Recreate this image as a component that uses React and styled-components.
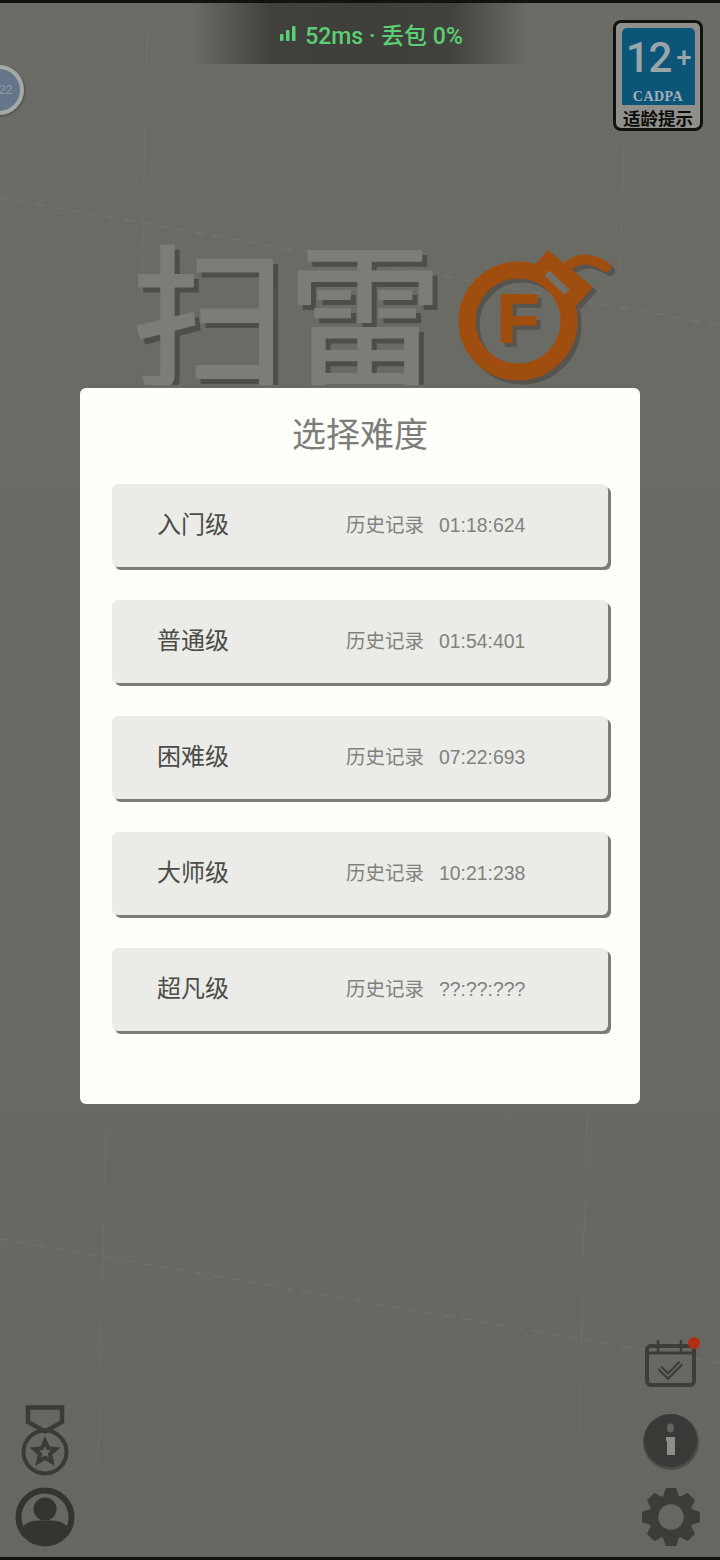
import styled, { createGlobalStyle } from "styled-components";

const GlobalStyle = createGlobalStyle`
  html, body {
    margin: 0;
    padding: 0;
    background: #686963;
  }
  * {
    box-sizing: border-box;
  }
`;

const CJK = `"Noto Sans CJK SC", "Noto Sans", sans-serif`;

const levels = [
  { name: "入门级", record: "01:18:624" },
  { name: "普通级", record: "01:54:401" },
  { name: "困难级", record: "07:22:693" },
  { name: "大师级", record: "10:21:238" },
  { name: "超凡级", record: "??:??:???" },
];

// 톱니 경로
const gearPath = (cx, cy, outer, root, teeth) => {
  const pts = [];
  const step = (Math.PI * 2) / teeth;
  for (let i = 0; i < teeth; i++) {
    const a = i * step - Math.PI / 2;
    const list = [
      [root, a - step * 0.42],
      [outer, a - step * 0.2],
      [outer, a + step * 0.2],
      [root, a + step * 0.42],
    ];
    list.forEach(([r, t]) => {
      pts.push(`${(cx + r * Math.cos(t)).toFixed(2)} ${(cy + r * Math.sin(t)).toFixed(2)}`);
    });
  }
  return `M${pts.join("L")}Z`;
};

const SceneLines = () => (
  <Scene viewBox="0 0 720 1560">
    <g stroke="#ffffff" strokeOpacity="0.06" strokeWidth="1.5" fill="none">
      <path d="M0 195 L720 322" strokeDasharray="9 9" />
      <path d="M0 1236 L720 1360" strokeDasharray="9 9" />
    </g>
    <g stroke="#ffffff" strokeOpacity="0.035" strokeWidth="1.5" fill="none">
      <path d="M147 30 L142 270" strokeDasharray="58 38" />
      <path d="M624 140 L620 270" strokeDasharray="50 30" />
      <path d="M106 1125 L98 1460" strokeDasharray="58 36" />
      <path d="M587 1110 L578 1460" strokeDasharray="52 38" />
    </g>
  </Scene>
);

const SignalIcon = () => (
  <svg width="17" height="15" viewBox="0 0 17 15">
    <rect x="0" y="8" width="3.5" height="7" rx="1" fill="#5ccf74" />
    <rect x="6" y="4" width="3.5" height="11" rx="1" fill="#5ccf74" />
    <rect x="12" y="0" width="3.5" height="15" rx="1" fill="#5ccf74" />
  </svg>
);

const bombCap = "M98 0 L83 17 L127 55 L143 37 Z";
const bombFuse = "M117 17 C126 8 140 6 156 17";

const BombLogo = () => (
  <BombSvg viewBox="0 0 165 135" width="165" height="135">
    <g transform="translate(4 4)">
      <circle cx="68" cy="71" r="51" fill="none" stroke="#56544c" strokeWidth="17" />
      <path d={bombCap} fill="#56544c" />
      <path d={bombFuse} fill="none" stroke="#56544c" strokeWidth="10" strokeLinecap="round" />
    </g>
    <circle cx="68" cy="71" r="51" fill="none" stroke="#a04e10" strokeWidth="17" />
    <path d={bombCap} fill="#a04e10" />
    <path d={bombFuse} fill="none" stroke="#a04e10" strokeWidth="10" strokeLinecap="round" />
    <path d="M97 23 L117 42" stroke="#73726a" strokeWidth="7" />
    <BombLetter x="68" y="92" fill="#a04e10" stroke="#a04e10">F</BombLetter>
  </BombSvg>
);

const MedalIcon = () => (
  <svg width="48" height="72" viewBox="0 0 48 72">
    <g fill="none" stroke="#3a3b37" strokeWidth="4.5">
      <path d="M7 2.5 H41 V17 L24 26.5 L7 17 Z" />
      <circle cx="24" cy="47" r="21.5" strokeWidth="4" />
    </g>
    <path
      d="M24 31 L28.6 41.5 L39.5 42.5 L31.3 49.8 L33.8 61 L24 55 L14.2 61 L16.7 49.8 L8.5 42.5 L19.4 41.5 Z"
      fill="#3a3b37"
    />
    <path
      d="M24 41 L25.7 45 L30 45.4 L26.7 48.4 L27.7 52.6 L24 50.4 L20.3 52.6 L21.3 48.4 L18 45.4 L22.3 45 Z"
      fill="#686963"
    />
  </svg>
);

const ProfileIcon = () => (
  <svg width="60" height="60" viewBox="0 0 60 60">
    <defs>
      <clipPath id="profile-clip">
        <circle cx="30" cy="30" r="24" />
      </clipPath>
    </defs>
    <circle cx="30" cy="30" r="26.5" fill="none" stroke="#343531" strokeWidth="6" />
    <g clipPath="url(#profile-clip)" fill="#343531">
      <circle cx="30" cy="22" r="11.5" />
      <path d="M6 60 V46 C6 38 14 34 22 33.5 H38 C46 34 54 38 54 46 V60 Z" />
    </g>
  </svg>
);

const CalendarIcon = () => (
  <CalendarWrap>
    <svg width="52" height="48" viewBox="0 0 52 48">
      <g fill="none" stroke="#3c3d39" strokeWidth="4">
        <rect x="2" y="7" width="47" height="39" rx="4" />
        <path d="M2 14 H49" strokeWidth="3" />
        <path d="M13 1 V13 M36 1 V13" strokeWidth="2.5" />
      </g>
      <path d="M15 29 L23 37 L36 24" fill="none" stroke="#3c3d39" strokeWidth="6" />
      <path d="M15 29 L23 37 L36 24" fill="none" stroke="#6b6c66" strokeWidth="1.5" />
    </svg>
    <RedDot />
  </CalendarWrap>
);

const InfoIcon = () => (
  <svg width="58" height="58" viewBox="0 0 58 58">
    <circle cx="29" cy="29" r="28" fill="#4b4c48" />
    <circle cx="28.5" cy="27.5" r="26.5" fill="#393a37" />
    <ellipse cx="28.5" cy="15" rx="3.5" ry="4.5" fill="#62635e" />
    <path d="M24 24 H33 V42 H25 V28 H24 Z" fill="#8d8e88" />
  </svg>
);

const GearIcon = () => (
  <svg width="60" height="60" viewBox="0 0 60 60">
    <path
      fillRule="evenodd"
      fill="#3c3d39"
      stroke="#3c3d39"
      strokeWidth="2.5"
      strokeLinejoin="round"
      d={`${gearPath(30, 30, 28, 21, 8)} M30 16 A14 14 0 1 0 30 44 A14 14 0 1 0 30 16 Z`}
    />
  </svg>
);

const App = () => {
  return (
    <Screen>
      <GlobalStyle />
      <SceneLines />

      <TopBar>
        <AvatarChip>22</AvatarChip>
        <AgeBadge>
          <AgePanel>
            <AgeNumber>
              12<AgePlus>+</AgePlus>
            </AgeNumber>
            <AgeOrg>CADPA</AgeOrg>
          </AgePanel>
          <AgeCaption>适龄提示</AgeCaption>
        </AgeBadge>
      </TopBar>

      <NetworkHud>
        <SignalIcon />
        <span>52ms · 丢包 0%</span>
      </NetworkHud>

      <LogoRow>
        <LogoTitle>扫雷</LogoTitle>
        <BombLogo />
      </LogoRow>

      <BottomBar>
        <LeftDock>
          <MedalIcon />
          <ProfileIcon />
        </LeftDock>
        <RightDock>
          <CalendarIcon />
          <InfoIcon />
          <GearIcon />
        </RightDock>
      </BottomBar>

      <ModalLayer>
        <Modal>
          <ModalTitle>选择难度</ModalTitle>
          <LevelList>
            {levels.map((level) => (
              <LevelRow key={level.name}>
                <LevelName>{level.name}</LevelName>
                <RecordLabel>历史记录</RecordLabel>
                <RecordTime>{level.record}</RecordTime>
              </LevelRow>
            ))}
          </LevelList>
        </Modal>
      </ModalLayer>
    </Screen>
  );
};

export default App;

const Screen = styled.div`
  position: relative;
  width: 720px;
  height: 1560px;
  overflow: hidden;
  display: flex;
  flex-direction: column;
  background: linear-gradient(180deg, #6b6c65 0%, #696a64 35%, #666760 100%);
  border-top: 3px solid #12120f;
  border-bottom: 3px solid #12120f;
  font-family: ${CJK};
`;

const Scene = styled.svg`
  position: absolute;
  inset: 0;
  width: 720px;
  height: 1560px;
`;

const TopBar = styled.div`
  position: relative;
  display: flex;
  justify-content: space-between;
  align-items: flex-start;
  padding: 17px 17px 0 0;
`;

// 왼쪽 위 레벨 배지
const AvatarChip = styled.div`
  width: 50px;
  height: 50px;
  margin: 45px 0 0 -26px;
  padding-left: 21px;
  border-radius: 50%;
  border: 4px solid #a4a8a7;
  background: #66768a;
  color: #8f99a5;
  font: 12px/42px "Liberation Sans", sans-serif;
  box-shadow: 1px 1px 2px rgba(50, 50, 45, 0.5);
`;

const AgeBadge = styled.div`
  width: 90px;
  height: 111px;
  display: flex;
  flex-direction: column;
  align-items: center;
  padding-top: 5px;
  border: 3px solid #12120f;
  border-radius: 8px;
  background: #8f908c;
`;

const AgePanel = styled.div`
  width: 73px;
  height: 77px;
  display: flex;
  flex-direction: column;
  align-items: center;
  border-radius: 5px 5px 0 0;
  background: #0b5579;
`;

const AgeNumber = styled.div`
  height: 52px;
  padding-top: 10px;
  color: #9aa5aa;
  font: 500 42px/40px "Roboto", sans-serif;
  letter-spacing: -1px;
`;

const AgePlus = styled.span`
  margin-left: 5px;
  font-size: 27px;
  vertical-align: 5px;
`;

const AgeOrg = styled.div`
  margin-top: 9px;
  color: #a4afb4;
  font: 700 14px/16px "Liberation Serif", serif;
  letter-spacing: 0.5px;
`;

const AgeCaption = styled.div`
  margin-top: 2px;
  color: #0a0a08;
  font: 700 17.5px/22px ${CJK};
  white-space: nowrap;
`;

const NetworkHud = styled.div`
  position: absolute;
  top: -3px;
  left: 190px;
  width: 340px;
  height: 64px;
  display: flex;
  align-items: center;
  justify-content: center;
  gap: 8px;
  padding: 3px 0 0 23px;
  color: #5ccf74;
  font-family: "Roboto", ${CJK};
  font-size: 23px;
  font-weight: 500;
  white-space: nowrap;
  background: linear-gradient(
    90deg,
    rgba(62, 63, 58, 0) 0%,
    rgba(62, 63, 58, 0.95) 24%,
    rgba(62, 63, 58, 1) 50%,
    rgba(62, 63, 58, 0.95) 76%,
    rgba(62, 63, 58, 0) 100%
  );
`;

const LogoRow = styled.div`
  position: relative;
  display: flex;
  align-items: flex-start;
  padding: 87px 0 0 131px;
`;

const LogoTitle = styled.div`
  height: 167px;
  overflow: hidden;
  color: #7c7d78;
  font-size: 156px;
  font-weight: 500;
  line-height: 180px;
  white-space: nowrap;
  text-shadow: 5px 5px 0 #4d4e49;
`;

const BombSvg = styled.svg`
  flex: none;
  margin: 32px 0 0 7px;
`;

const BombLetter = styled.text`
  font: 700 68px "Liberation Sans", sans-serif;
  text-anchor: middle;
  stroke-width: 2;
  stroke-linejoin: round;
  filter: drop-shadow(4px 4px 0 #56544c);
`;

const BottomBar = styled.div`
  position: relative;
  margin-top: auto;
  display: flex;
  justify-content: space-between;
  align-items: flex-end;
  padding: 0 19px 10px 15px;
`;

const LeftDock = styled.div`
  display: flex;
  flex-direction: column;
  align-items: center;
  gap: 10px;
`;

const RightDock = styled.div`
  display: flex;
  flex-direction: column;
  align-items: center;
  gap: 16px;
`;

const CalendarWrap = styled.div`
  position: relative;
  width: 52px;
  height: 48px;
  margin-bottom: 10px;
`;

const RedDot = styled.span`
  position: absolute;
  top: -2px;
  right: -3px;
  width: 12px;
  height: 12px;
  border-radius: 50%;
  background: #b32e10;
`;

const ModalLayer = styled.div`
  position: absolute;
  inset: 0;
  display: flex;
  justify-content: center;
  align-items: flex-start;
  padding-top: 385px;
`;

const Modal = styled.div`
  width: 560px;
  height: 716px;
  padding: 0 32px;
  border-radius: 6px;
  background: #fefffb;
`;

const ModalTitle = styled.h2`
  margin: 0;
  height: 96px;
  color: #7c7d79;
  font-size: 34px;
  font-weight: 400;
  line-height: 90px;
  text-align: center;
`;

const LevelList = styled.div`
  display: flex;
  flex-direction: column;
  gap: 33px;
`;

// 난이도 한 줄
const LevelRow = styled.div`
  width: 496px;
  height: 83px;
  display: flex;
  align-items: center;
  padding-left: 45px;
  border-radius: 6px;
  background: #ebebe8;
  box-shadow: 3px 3px 0 #7c7d77;
`;

const LevelName = styled.div`
  width: 189px;
  padding-bottom: 6px;
  color: #4b4c48;
  font-size: 24px;
`;

const RecordLabel = styled.div`
  width: 93px;
  padding-bottom: 5px;
  color: #81827e;
  font-size: 19.5px;
`;

const RecordTime = styled.div`
  color: #81827e;
  font-family: "Liberation Sans", sans-serif;
  font-size: 19.4px;
`;
